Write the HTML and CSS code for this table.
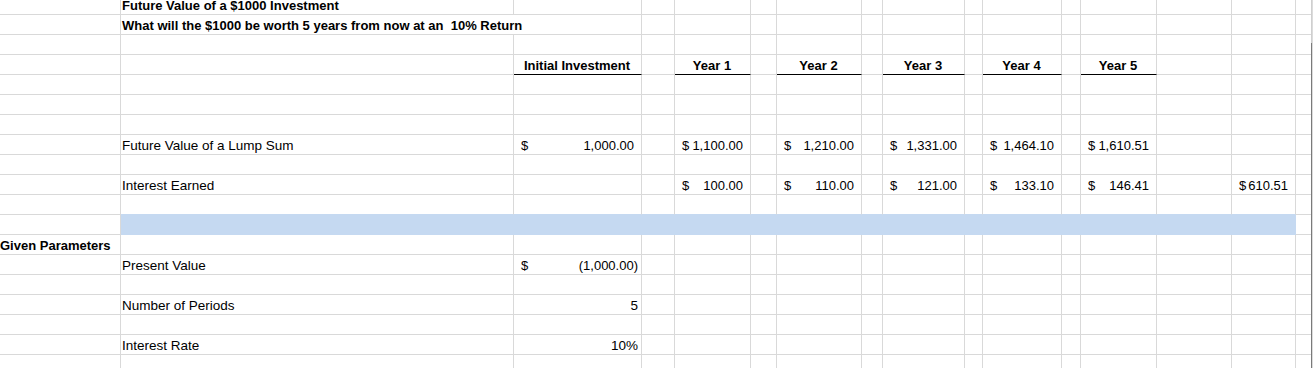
FILE: index.html
```html
<!DOCTYPE html>
<html>
<head>
<meta charset="utf-8">
<link rel="stylesheet" href="styles.css">
</head>
<body>
<div class="window">
<div class="sheet">
  <!-- row 1 -->
  <div class="c"></div><div class="c b">Future Value of a $1000 Investment</div><div class="c"></div><div class="c"></div><div class="c"></div><div class="c"></div><div class="c"></div><div class="c"></div><div class="c"></div><div class="c"></div><div class="c"></div><div class="c"></div><div class="c"></div><div class="c"></div><div class="c"></div><div class="c end"></div>
  <!-- row 2 -->
  <div class="c"></div><div class="c b wide">What will the $1000 be worth 5 years from now at an&nbsp; 10% Return</div><div class="c"></div><div class="c"></div><div class="c"></div><div class="c"></div><div class="c"></div><div class="c"></div><div class="c"></div><div class="c"></div><div class="c"></div><div class="c"></div><div class="c"></div><div class="c"></div><div class="c end"></div>
  <!-- row 3 -->
  <div class="c"></div><div class="c"></div><div class="c"></div><div class="c"></div><div class="c"></div><div class="c"></div><div class="c"></div><div class="c"></div><div class="c"></div><div class="c"></div><div class="c"></div><div class="c"></div><div class="c"></div><div class="c"></div><div class="c"></div><div class="c end"></div>
  <!-- row 4: headers -->
  <div class="c"></div><div class="c"></div><div class="c hd">Initial Investment</div><div class="c"></div><div class="c hd">Year 1</div><div class="c"></div><div class="c hd">Year 2</div><div class="c"></div><div class="c hd">Year 3</div><div class="c"></div><div class="c hd">Year 4</div><div class="c"></div><div class="c hd">Year 5</div><div class="c"></div><div class="c"></div><div class="c end"></div>
  <!-- row 5 -->
  <div class="c"></div><div class="c"></div><div class="c"></div><div class="c"></div><div class="c"></div><div class="c"></div><div class="c"></div><div class="c"></div><div class="c"></div><div class="c"></div><div class="c"></div><div class="c"></div><div class="c"></div><div class="c"></div><div class="c"></div><div class="c end"></div>
  <!-- row 6 -->
  <div class="c"></div><div class="c"></div><div class="c"></div><div class="c"></div><div class="c"></div><div class="c"></div><div class="c"></div><div class="c"></div><div class="c"></div><div class="c"></div><div class="c"></div><div class="c"></div><div class="c"></div><div class="c"></div><div class="c"></div><div class="c end"></div>
  <!-- row 7 -->
  <div class="c"></div><div class="c"></div><div class="c"></div><div class="c"></div><div class="c"></div><div class="c"></div><div class="c"></div><div class="c"></div><div class="c"></div><div class="c"></div><div class="c"></div><div class="c"></div><div class="c"></div><div class="c"></div><div class="c"></div><div class="c end"></div>
  <!-- row 8: future value -->
  <div class="c"></div><div class="c">Future Value of a Lump Sum</div>
  <div class="c acct"><span>$</span><span>1,000.00</span></div><div class="c"></div>
  <div class="c acct"><span>$</span><span>1,100.00</span></div><div class="c"></div>
  <div class="c acct"><span>$</span><span>1,210.00</span></div><div class="c"></div>
  <div class="c acct"><span>$</span><span>1,331.00</span></div><div class="c"></div>
  <div class="c acct"><span>$</span><span>1,464.10</span></div><div class="c"></div>
  <div class="c acct"><span>$</span><span>1,610.51</span></div><div class="c"></div><div class="c"></div><div class="c end"></div>
  <!-- row 9 -->
  <div class="c"></div><div class="c"></div><div class="c"></div><div class="c"></div><div class="c"></div><div class="c"></div><div class="c"></div><div class="c"></div><div class="c"></div><div class="c"></div><div class="c"></div><div class="c"></div><div class="c"></div><div class="c"></div><div class="c"></div><div class="c end"></div>
  <!-- row 10: interest earned -->
  <div class="c"></div><div class="c">Interest Earned</div><div class="c"></div><div class="c"></div>
  <div class="c acct"><span>$</span><span>100.00</span></div><div class="c"></div>
  <div class="c acct"><span>$</span><span>110.00</span></div><div class="c"></div>
  <div class="c acct"><span>$</span><span>121.00</span></div><div class="c"></div>
  <div class="c acct"><span>$</span><span>133.10</span></div><div class="c"></div>
  <div class="c acct"><span>$</span><span>146.41</span></div><div class="c"></div>
  <div class="c acct"><span>$</span><span>610.51</span></div><div class="c end"></div>
  <!-- row 11 -->
  <div class="c"></div><div class="c ab"></div><div class="c ab"></div><div class="c ab"></div><div class="c ab"></div><div class="c ab"></div><div class="c ab"></div><div class="c ab"></div><div class="c ab"></div><div class="c ab"></div><div class="c ab"></div><div class="c ab"></div><div class="c ab"></div><div class="c ab"></div><div class="c ab"></div><div class="c end"></div>
  <!-- row 12: band -->
  <div class="c"></div><div class="c band"></div><div class="c end"></div>
  <!-- row 13 -->
  <div class="c b flush">Given Parameters</div><div class="c"></div><div class="c"></div><div class="c"></div><div class="c"></div><div class="c"></div><div class="c"></div><div class="c"></div><div class="c"></div><div class="c"></div><div class="c"></div><div class="c"></div><div class="c"></div><div class="c"></div><div class="c"></div><div class="c end"></div>
  <!-- row 14 -->
  <div class="c"></div><div class="c">Present Value</div><div class="c acct neg"><span>$</span><span>(1,000.00)</span></div><div class="c"></div><div class="c"></div><div class="c"></div><div class="c"></div><div class="c"></div><div class="c"></div><div class="c"></div><div class="c"></div><div class="c"></div><div class="c"></div><div class="c"></div><div class="c"></div><div class="c end"></div>
  <!-- row 15 -->
  <div class="c"></div><div class="c"></div><div class="c"></div><div class="c"></div><div class="c"></div><div class="c"></div><div class="c"></div><div class="c"></div><div class="c"></div><div class="c"></div><div class="c"></div><div class="c"></div><div class="c"></div><div class="c"></div><div class="c"></div><div class="c end"></div>
  <!-- row 16 -->
  <div class="c"></div><div class="c">Number of Periods</div><div class="c num">5</div><div class="c"></div><div class="c"></div><div class="c"></div><div class="c"></div><div class="c"></div><div class="c"></div><div class="c"></div><div class="c"></div><div class="c"></div><div class="c"></div><div class="c"></div><div class="c"></div><div class="c end"></div>
  <!-- row 17 -->
  <div class="c"></div><div class="c"></div><div class="c"></div><div class="c"></div><div class="c"></div><div class="c"></div><div class="c"></div><div class="c"></div><div class="c"></div><div class="c"></div><div class="c"></div><div class="c"></div><div class="c"></div><div class="c"></div><div class="c"></div><div class="c end"></div>
  <!-- row 18 -->
  <div class="c"></div><div class="c">Interest Rate</div><div class="c num">10%</div><div class="c"></div><div class="c"></div><div class="c"></div><div class="c"></div><div class="c"></div><div class="c"></div><div class="c"></div><div class="c"></div><div class="c"></div><div class="c"></div><div class="c"></div><div class="c"></div><div class="c end"></div>
  <!-- row 19 -->
  <div class="c"></div><div class="c"></div><div class="c"></div><div class="c"></div><div class="c"></div><div class="c"></div><div class="c"></div><div class="c"></div><div class="c"></div><div class="c"></div><div class="c"></div><div class="c"></div><div class="c"></div><div class="c"></div><div class="c"></div><div class="c end"></div>
</div>
<div class="edge"></div>
</div>
</body>
</html>
```

FILE: styles.css
```css
html, body {
  margin: 0;
  padding: 0;
  background: #ffffff;
}

body {
  width: 1313px;
  height: 368px;
  overflow: hidden;
  font-family: "Liberation Sans", Arial, sans-serif;
  font-size: 13.5px;
  color: #000000;
}

.window {
  display: flex;
  margin-top: -5px;
}

.sheet {
  display: grid;
  grid-template-columns: 121px 393px 128px 33px 76px 26px 85px 21px 82px 18px 79px 19px 76px 75px 64px 15px;
  grid-auto-rows: 20px;
}

.c {
  box-sizing: border-box;
  border-right: 1px solid #d9d9d9;
  border-bottom: 1px solid #d9d9d9;
  padding: 0 2px 0 1px;
  line-height: 22px;
  white-space: nowrap;
  overflow: visible;
}

.end {
  border-right: none;
}

.b {
  font-weight: bold;
  font-size: 13px;
}

.wide {
  grid-column: span 2;
}

.flush {
  padding-left: 0;
}

.hd {
  text-align: center;
  font-weight: bold;
  font-size: 13px;
  border-bottom-color: #000000;
}

.acct {
  display: flex;
  justify-content: space-between;
  padding: 0 7px 0 7px;
  font-size: 13px;
}

.acct.neg {
  padding-right: 3px;
}

.num {
  text-align: right;
  padding-right: 3px;
}

.ab {
  border-bottom-color: #c5d9f1;
}

.band {
  grid-column: span 14;
  background: #c5d9f1;
  border-color: #c5d9f1;
}

.edge {
  width: 2px;
  background:
    linear-gradient(#cfcfcf, #cfcfcf) no-repeat 0 0 / 1px 48px,
    linear-gradient(#7a7a7a, #7a7a7a) no-repeat 0 48px / 1px 100%,
    #dcdcdc;
}
```
